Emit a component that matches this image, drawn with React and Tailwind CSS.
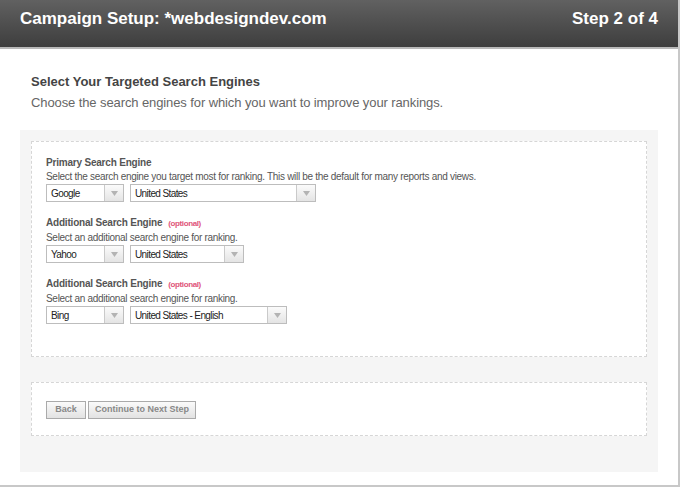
import React from "react";

function Select({ value, width }) {
  return (
    <div
      className="flex h-[18px] border border-[#bdbdbd] bg-white"
      style={{ width }}
    >
      <div className="flex flex-1 items-center pl-[4px] text-[10px] tracking-[-0.6px] text-[#222]">{value}</div>
      <div className="flex w-[19px] items-center justify-center border-l border-[#cacaca] bg-gradient-to-b from-[#fbfbfb] to-[#e4e4e4]">
        <svg width="7" height="5" viewBox="0 0 7 5">
          <path d="M0 0 L7 0 L3.5 5 Z" fill="#b3b3b3" />
        </svg>
      </div>
    </div>
  );
}

function EngineField({ title, optional, desc, engine, country, countryWidth }) {
  return (
    <div className="flex flex-col">
      <div className="flex items-baseline gap-[6px] text-[10px] font-bold leading-[14px] tracking-[-0.2px] text-[#555]">
        {title}
        {optional && <span className="text-[8px] font-bold tracking-[-0.4px] text-[#e0557a]">(optional)</span>}
      </div>
      <div className="text-[10px] leading-[14px] tracking-[-0.3px] text-[#555]">{desc}</div>
      <div className="flex gap-[6px]">
        <Select value={engine} width={78} />
        <Select value={country} width={186 - (186 - countryWidth)} />
      </div>
    </div>
  );
}

function Button({ children, w }) {
  return (
    <button
      className="flex h-[18px] items-center justify-center border border-[#aaa] bg-gradient-to-b from-[#fafafa] to-[#e2e2e2] text-[9px] font-bold text-[#888]"
      style={{ width: w }}
    >
      {children}
    </button>
  );
}

export default function App() {
  return (
    <div className="h-[487px] w-[680px] overflow-hidden bg-white font-['Liberation_Sans',Arial,sans-serif]">
      <div className="flex h-[487px] flex-col border-r-2 border-b-2 border-[#c8c8c8]">
        {/* header */}
        <div className="flex h-[49px] items-start justify-between border-b-2 border-[#b9b9b9] bg-gradient-to-b from-[#616161] to-[#3e3e3e] px-5 pt-[6px]">
          <div className="text-[17px] font-bold text-white">Campaign Setup: *webdesigndev.com</div>
          <div className="text-[17px] font-bold text-white">Step 2 of 4</div>
        </div>

        <div className="px-[31px] pt-[24px]">
          <div className="text-[13px] font-bold leading-[18px] text-[#444]">Select Your Targeted Search Engines</div>
          <div className="mt-[3px] text-[13px] leading-[18px] tracking-[-0.1px] text-[#666]">
            Choose the search engines for which you want to improve your rankings.
          </div>
        </div>

        <div className="mx-5 mt-[18px] flex h-[342px] w-[638px] flex-col gap-[25px] bg-[#f5f5f5] px-[11px] pt-[11px]">
          <div className="flex h-[216px] flex-col gap-[14px] border border-dashed border-[#d6d6d6] bg-white px-[14px] pt-[14px]">
            <EngineField
              title="Primary Search Engine"
              desc="Select the search engine you target most for ranking. This will be the default for many reports and views."
              engine="Google"
              country="United States"
              countryWidth={186}
            />
            <EngineField
              title="Additional Search Engine"
              optional
              desc="Select an additional search engine for ranking."
              engine="Yahoo"
              country="United States"
              countryWidth={114}
            />
            <EngineField
              title="Additional Search Engine"
              optional
              desc="Select an additional search engine for ranking."
              engine="Bing"
              country="United States - English"
              countryWidth={157}
            />
          </div>

          <div className="flex h-[54px] items-center gap-[2px] border border-dashed border-[#d6d6d6] bg-white px-[14px] pt-[1px]">
            <Button w={40}>Back</Button>
            <Button w={108}>Continue to Next Step</Button>
          </div>
        </div>
      </div>
    </div>
  );
}
